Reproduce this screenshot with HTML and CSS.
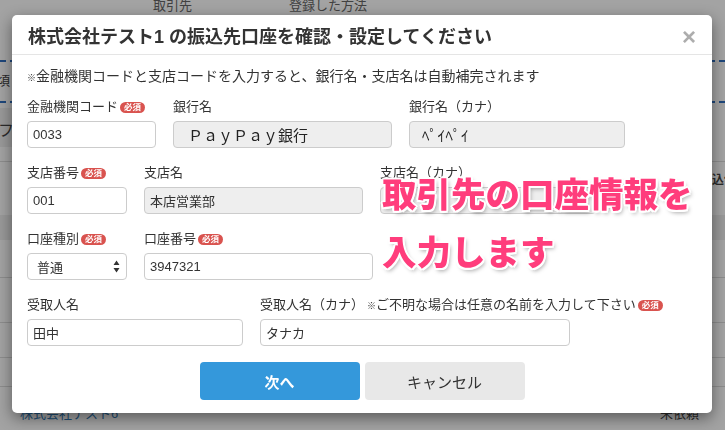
FILE: index.html
```html
<!DOCTYPE html>
<html lang="ja">
<head>
<meta charset="utf-8">
<title>振込先口座の確認・設定</title>
<link rel="stylesheet" href="styles.css">
</head>
<body>
<div class="page">
  <div class="thead">
    <span class="th th-client">取引先</span>
    <span class="th th-method">登録した方法</span>
  </div>
  <div class="row row-dashed"><span class="cell-left">頃</span></div>
  <div class="row row-band"><span class="cell-left big">フ</span></div>
  <div class="row row-gap"></div>
  <div class="row row-b"><span class="cell-right">込伝</span></div>
  <div class="row row-shade"></div>
  <div class="row row-c"></div>
  <div class="row row-d"></div>
  <div class="row row-e"></div>
  <div class="row row-f"></div>
  <div class="row row-last"><span class="link">株式会社テスト6</span><span class="status">未依頼</span></div>
</div>
<div class="backdrop"></div>

<div class="modal">
  <div class="modal-header">
    <h1 class="modal-title">株式会社テスト1 の振込先口座を確認・設定してください</h1>
    <span class="close">×</span>
  </div>
  <div class="modal-body">
    <p class="note"><span class="kome">※</span>金融機関コードと支店コードを入力すると、銀行名・支店名は自動補完されます</p>

    <div class="form-row">
      <div class="field w129">
        <label class="lbl">金融機関コード<span class="req">必須</span></label>
        <input class="inp" type="text" value="0033">
      </div>
      <div class="field w219">
        <label class="lbl">銀行名</label>
        <input class="inp ro big-val" type="text" value="ＰａｙＰａｙ銀行" readonly>
      </div>
      <div class="field w216">
        <label class="lbl">銀行名（カナ）</label>
        <input class="inp ro big-val kana" type="text" value="ﾍﾟｲﾍﾟｲ" readonly>
      </div>
    </div>

    <div class="form-row">
      <div class="field w100">
        <label class="lbl">支店番号<span class="req">必須</span></label>
        <input class="inp" type="text" value="001">
      </div>
      <div class="field w219">
        <label class="lbl">支店名</label>
        <input class="inp ro" type="text" value="本店営業部" readonly>
      </div>
      <div class="field w216">
        <label class="lbl">支店名（カナ）</label>
        <input class="inp ro" type="text" value="" readonly>
      </div>
    </div>

    <div class="form-row">
      <div class="field w100">
        <label class="lbl">口座種別<span class="req">必須</span></label>
        <div class="select">
          <span>普通</span>
          <svg class="arrows" width="7" height="13" viewBox="0 0 7 13"><path d="M3.5 0.5 L6.5 5 L0.5 5 Z M3.5 12.5 L6.5 8 L0.5 8 Z" fill="#333"/></svg>
        </div>
      </div>
      <div class="field w229">
        <label class="lbl">口座番号<span class="req">必須</span></label>
        <input class="inp" type="text" value="3947321">
      </div>
    </div>

    <div class="form-row">
      <div class="field w216">
        <label class="lbl">受取人名</label>
        <input class="inp" type="text" value="田中">
      </div>
      <div class="field w310">
        <label class="lbl">受取人名（カナ）<span class="hint"><span class="kome">※</span>ご不明な場合は任意の名前を入力して下さい</span><span class="req">必須</span></label>
        <input class="inp" type="text" value="タナカ">
      </div>
    </div>

    <div class="actions">
      <button class="btn btn-primary" type="button">次へ</button>
      <button class="btn btn-default" type="button">キャンセル</button>
    </div>

    <div class="callout">取引先の口座情報を<br>入力します</div>
  </div>
</div>
</body>
</html>
```

FILE: styles.css
```css
* { box-sizing: border-box; }

html, body {
  margin: 0;
  padding: 0;
  width: 725px;
  height: 430px;
  overflow: hidden;
  background: #fff;
  font-family: "Liberation Sans", "Noto Sans CJK JP", sans-serif;
  color: #333;
}

/* ---------- page behind the modal ---------- */
.page {
  width: 725px;
}
.thead {
  height: 60px;
  position: relative;
  font-size: 13px;
  line-height: 12px;
  color: #666;
}
.th { position: absolute; top: 0; }
.th-client { left: 153px; }
.th-method { left: 289px; }

.row { position: relative; width: 725px; }
.row-dashed {
  height: 43px;
  border-top: 2px dashed #2f6fc0;
  border-bottom: 2px dashed #2f6fc0;
  margin-bottom: 5px;
}
.row-band {
  height: 39px;
  width: 360px;
  background: #efefef;
}
.row-gap { height: 15px; border-bottom: 1px solid #ddd; }
.row-b { height: 53px; }
.row-shade { height: 25px; background: #efefef; }
.row-c { height: 38px; border-bottom: 1px solid #ddd; }
.row-d { height: 45px; border-bottom: 1px solid #ddd; }
.row-e { height: 35px; border-bottom: 1px solid #ddd; }
.row-f { height: 29px; border-bottom: 1px solid #ddd; }
.row-last { height: 43px; font-size: 13px; }

.cell-left {
  position: absolute;
  left: -3px;
  font-size: 13px;
  color: #444;
}
.row-dashed .cell-left { top: 8px; }
.cell-left.big { font-size: 16px; top: 9px; left: -2px; }
.cell-right {
  position: absolute;
  left: 712px;
  top: 8px;
  font-size: 12px;
  font-weight: bold;
  color: #444;
  white-space: nowrap;
}
.link {
  position: absolute;
  left: 20px;
  top: 16px;
  color: #337ab7;
}
.status {
  position: absolute;
  left: 660px;
  top: 16px;
  color: #444;
}

.backdrop {
  position: fixed;
  inset: 0;
  background: rgba(0, 0, 0, 0.36);
}

/* ---------- modal ---------- */
.modal {
  position: absolute;
  left: 12px;
  top: 15px;
  width: 700px;
  background: #fff;
  border-radius: 5px;
  box-shadow: 0 5px 15px rgba(0, 0, 0, 0.45);
}
.modal-header {
  display: flex;
  align-items: center;
  justify-content: space-between;
  padding: 12px 16px 7px 16px;
  border-bottom: 1px solid #e5e5e5;
}
.modal-title {
  margin: 0;
  font-size: 18px;
  line-height: 20px;
  font-weight: bold;
  color: #333;
}
.close {
  font-size: 24px;
  line-height: 20px;
  font-weight: bold;
  color: #adadad;
}

.modal-body {
  position: relative;
  padding: 12px 15px 13px 15px;
}
.note {
  margin: 0 0 11px 0;
  font-size: 14px;
  line-height: 18px;
  color: #333;
}
.kome {
  font-size: 9px;
}

.form-row {
  display: flex;
  gap: 17px;
  margin-bottom: 16px;
}
.field {
  display: flex;
  flex-direction: column;
}
.w100 { width: 100px; }
.w129 { width: 129px; }
.w216 { width: 216px; }
.w219 { width: 219px; }
.w229 { width: 229px; }
.w310 { width: 310px; }

.lbl {
  display: flex;
  align-items: center;
  height: 18px;
  font-size: 13px;
  line-height: 18px;
  margin-bottom: 5px;
  color: #333;
  white-space: nowrap;
}
.hint {
  font-size: 13px;
  margin-left: 3px;
}
.req {
  display: inline-block;
  flex: none;
  width: 25px;
  height: 11px;
  margin-left: 2px;
  border-radius: 6px;
  background: #d9534f;
  color: #fff;
  font-size: 8.5px;
  line-height: 11px;
  font-weight: bold;
  text-align: center;
}

.inp {
  height: 27px;
  width: 100%;
  margin: 0;
  padding: 0 5px;
  border: 1px solid #ccc;
  border-radius: 4px;
  background: #fff;
  font-family: "Liberation Sans", "Noto Sans CJK JP", sans-serif;
  font-size: 13px;
  color: #333;
  outline: none;
}
.inp.ro { background: #eee; }
.inp.big-val { font-size: 15px; padding-left: 14px; color: #222; }
.inp.kana { padding-left: 12px; letter-spacing: 0.5px; }

.select {
  height: 27px;
  display: flex;
  align-items: center;
  justify-content: space-between;
  padding: 0 6px 0 9px;
  border: 1px solid #ccc;
  border-radius: 4px;
  background: #fff;
  font-size: 13px;
  color: #333;
}

.actions {
  display: flex;
  justify-content: center;
  gap: 5px;
  margin-top: 0;
}
.btn {
  width: 160px;
  height: 38px;
  border: none;
  border-radius: 4px;
  font-family: "Liberation Sans", "Noto Sans CJK JP", sans-serif;
  font-size: 15px;
}
.btn-primary {
  background: #3498db;
  color: #fff;
  font-weight: bold;
}
.btn-default {
  background: #e8e8e8;
  color: #333;
}

.callout {
  position: absolute;
  left: 370px;
  top: 108px;
  font-family: "Noto Sans CJK JP", sans-serif;
  font-weight: 900;
  font-size: 34.5px;
  line-height: 58px;
  color: #ff3d7c;
  white-space: nowrap;
  text-shadow:
    2px 0 0 #fff, -2px 0 0 #fff, 0 2px 0 #fff, 0 -2px 0 #fff,
    1.5px 1.5px 0 #fff, -1.5px 1.5px 0 #fff, 1.5px -1.5px 0 #fff, -1.5px -1.5px 0 #fff,
    2px 3px 4px rgba(0, 0, 0, 0.35);
}
```
